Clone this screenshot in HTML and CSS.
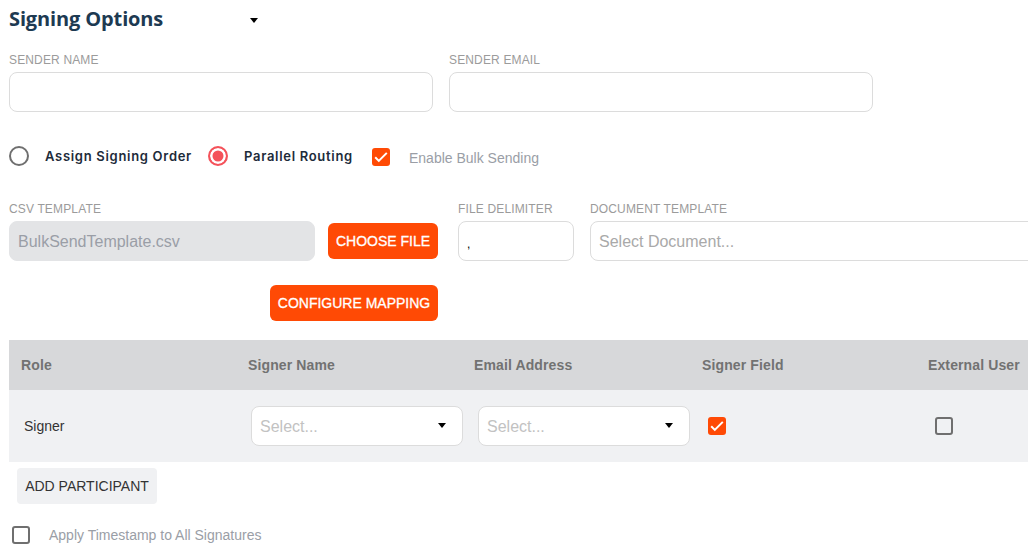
FILE: index.html
```html
<!DOCTYPE html>
<html lang="en">
	<head>
		<meta charset="UTF-8" />
		<meta name="viewport" content="width=device-width, initial-scale=1.0" />
		<title>Signing Options</title>
		<link rel="stylesheet" href="styles.css">
	</head>
	<body>
		<div class="page">
			<div class="title-row">
				<h2>Signing Options</h2>
				<span class="caret title-caret"></span>
			</div>

			<div class="sender-row">
				<div class="field field-sender">
					<label>SENDER NAME</label>
					<input type="text" />
				</div>
				<div class="field field-sender">
					<label>SENDER EMAIL</label>
					<input type="text" />
				</div>
			</div>

			<div class="options-row">
				<span class="radio"></span>
				<span class="option-label label-assign">Assign Signing Order</span>
				<span class="radio radio-on"></span>
				<span class="option-label label-parallel">Parallel Routing</span>
				<span class="check check-on">
					<svg viewBox="0 0 18 18" width="18" height="18"><path d="M3.2 9.3l3.6 3.6 8-8" fill="none" stroke="#fff" stroke-width="2"/></svg>
				</span>
				<span class="muted-label">Enable Bulk Sending</span>
			</div>

			<div class="bulk-row">
				<div class="field field-csv">
					<label>CSV TEMPLATE</label>
					<input type="text" class="input-disabled" value="BulkSendTemplate.csv" disabled />
				</div>
				<button class="btn btn-choose">CHOOSE FILE</button>
				<div class="field field-delim">
					<label>FILE DELIMITER</label>
					<input type="text" class="input-delim" value="," />
				</div>
				<div class="field field-doc">
					<label>DOCUMENT TEMPLATE</label>
					<input type="text" placeholder="Select Document..." />
				</div>
			</div>

			<div class="mapping-row">
				<button class="btn btn-mapping">CONFIGURE MAPPING</button>
			</div>

			<div class="table">
				<div class="table-row table-head">
					<div class="col-role">Role</div>
					<div class="col-name">Signer Name</div>
					<div class="col-email">Email Address</div>
					<div class="col-field">Signer Field</div>
					<div class="col-ext">External User</div>
				</div>
				<div class="table-row table-body">
					<div class="col-role cell-role">Signer</div>
					<div class="col-name">
						<div class="select"><span>Select...</span><span class="caret"></span></div>
					</div>
					<div class="col-email">
						<div class="select"><span>Select...</span><span class="caret"></span></div>
					</div>
					<div class="col-field">
						<span class="check check-on">
							<svg viewBox="0 0 18 18" width="18" height="18"><path d="M3.2 9.3l3.6 3.6 8-8" fill="none" stroke="#fff" stroke-width="2"/></svg>
						</span>
					</div>
					<div class="col-ext"><span class="check"></span></div>
				</div>
			</div>

			<button class="btn-add">ADD PARTICIPANT</button>

			<div class="timestamp-row">
				<span class="check"></span>
				<span class="muted-label">Apply Timestamp to All Signatures</span>
			</div>
		</div>
	</body>
</html>
```

FILE: styles.css
```css
* {
	box-sizing: border-box;
	margin: 0;
	padding: 0;
	font-family: "Liberation Sans", Arial, sans-serif;
}

body {
	background-color: white;
	overflow: hidden;
}

.page {
	width: 1028px;
	height: 551px;
	overflow: hidden;
	padding: 7px 0 0 9px;
}

.title-row {
	display: flex;
	align-items: center;
	height: 22px;
}

h2 {
	width: 240px;
	font-family: "Open Sans", sans-serif;
	font-size: 20px;
	font-weight: 700;
	letter-spacing: -0.13px;
	color: #1d3a52;
}

.caret {
	display: inline-block;
	width: 0;
	height: 0;
	border-left: 4.5px solid transparent;
	border-right: 4.5px solid transparent;
	border-top: 5px solid black;
}

.select .caret {
	margin-top: -2px;
}

.title-caret {
	margin: 5px 0 0 1px;
}

.sender-row {
	display: flex;
	gap: 16px;
	margin-top: 23px;
}

.field {
	flex-shrink: 0;
}

.field label {
	display: block;
	height: 20px;
	font-size: 12px;
	line-height: 17px;
	letter-spacing: 0.15px;
	color: #9b9b9b;
}

.field input {
	display: block;
	width: 100%;
	height: 40px;
	padding: 1px 8px 0;
	border: 1px solid #dcdcdc;
	border-radius: 8px;
	font-size: 16px;
	background: white;
}

.field input::placeholder {
	color: #a9a9a9;
	opacity: 1;
}

.field-sender {
	width: 424px;
}

.options-row {
	display: flex;
	align-items: center;
	height: 24px;
	margin-top: 33px;
}

.radio {
	width: 20px;
	height: 20px;
	border: 2px solid #6f6f6f;
	border-radius: 50%;
	margin-top: -2px;
}

.radio-on {
	border-color: #f4525a;
	background: #f4525a;
	box-shadow: inset 0 0 0 2.5px white;
}

.option-label {
	font-family: Inter, sans-serif;
	font-size: 13px;
	font-weight: 600;
	letter-spacing: 0.7px;
	color: #1d2b3a;
	margin-top: -2px;
}

.label-assign {
	width: 163px;
	margin-left: 16px;
}

.label-parallel {
	width: 128px;
	margin-left: 16px;
}

.check {
	display: inline-block;
	flex-shrink: 0;
	width: 18px;
	height: 18px;
	border: 2px solid #6f6f6f;
	border-radius: 3px;
	background: transparent;
}

.check-on {
	border: none;
	background: #ff4a05;
}

.check svg {
	display: block;
}

.muted-label {
	font-size: 14px;
	color: #9a9ea6;
}

.options-row .muted-label {
	margin: 2px 0 0 19px;
}

.bulk-row {
	display: flex;
	align-items: flex-end;
	margin-top: 32px;
}

.field-csv {
	width: 306px;
}

.input-disabled.input-disabled {
	background: #e3e4e6;
	border-color: #e3e4e6;
	color: #9a9ea6;
	font-size: 16px;
}

.btn {
	height: 36px;
	border: none;
	border-radius: 6px;
	background: #ff4a05;
	color: white;
	font-size: 14px;
	-webkit-text-stroke: 0.3px white;
	flex-shrink: 0;
}

.btn-choose {
	width: 110px;
	margin: 0 20px 2px 13px;
}

.field-delim {
	width: 116px;
	margin-right: 16px;
}

.field .input-delim {
	font-size: 12px;
	padding-top: 6px;
}

.field-doc {
	width: 480px;
}

.mapping-row {
	margin-top: 24px;
	padding-left: 261px;
}

.btn-mapping {
	width: 168px;
}

.table {
	width: 1019px;
	margin-top: 19px;
}

.table-row {
	display: flex;
	align-items: center;
}

.table-head {
	height: 50px;
	background: #d7d8da;
	font-size: 14px;
	font-weight: 700;
	letter-spacing: 0.12px;
	color: #727272;
}

.table-body {
	height: 72px;
	background: #f0f1f3;
}

.col-role {
	width: 239px;
	padding-left: 12px;
}

.cell-role {
	padding-left: 15px;
	font-size: 14px;
	color: #333;
}

.col-name {
	width: 226px;
}

.col-email {
	width: 228px;
}

.col-field {
	width: 226px;
}

.table-body .col-name {
	padding-left: 3px;
}

.table-body .col-email {
	padding-left: 4px;
}

.table-body .col-field {
	padding-left: 6px;
	display: flex;
}

.table-body .col-ext {
	padding-left: 7px;
	display: flex;
}

.col-ext {
	flex: 1;
	white-space: nowrap;
}

.select {
	display: flex;
	justify-content: space-between;
	align-items: center;
	width: 212px;
	height: 40px;
	padding: 0 16px 0 8px;
	background: white;
	border: 1px solid #dcdcdc;
	border-radius: 8px;
	font-size: 16px;
	color: #c2c2c2;
}

.select span:first-child {
	padding-top: 1px;
}

.btn-add {
	display: block;
	width: 140px;
	height: 36px;
	margin: 6px 0 0 8px;
	border: none;
	border-radius: 4px;
	background: #f0f1f3;
	color: #333;
	font-size: 14px;
}

.timestamp-row {
	display: flex;
	align-items: center;
	gap: 19px;
	margin: 22px 0 0 3px;
}
```
